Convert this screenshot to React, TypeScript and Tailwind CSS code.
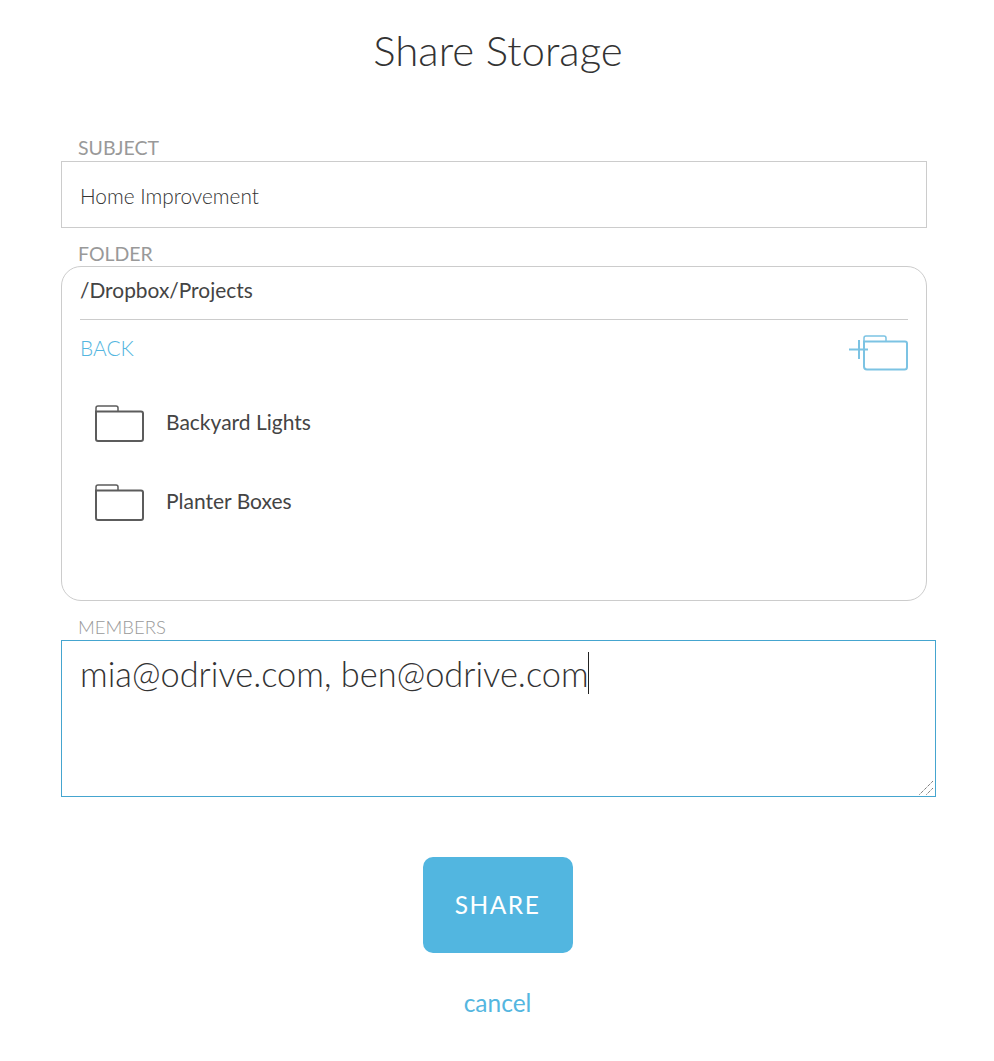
import React from "react";

const FolderIcon = ({ className }: { className?: string }) => (
  <svg width="49" height="37" viewBox="0 0 49 37" fill="none" stroke="currentColor" strokeWidth="2" className={className}>
    <path d="M1 6.5V3a2 2 0 0 1 2-2h18a2 2 0 0 1 2 2v3.5" strokeWidth="1.5" />
    <path d="M1 6.5h45a2 2 0 0 1 2 2V34a2 2 0 0 1-2 2H3a2 2 0 0 1-2-2V6.5z" />
  </svg>
);

const NewFolderIcon = () => (
  <svg width="59" height="36" viewBox="0 0 59 36" fill="none" stroke="#7cc3e3" strokeWidth="2" className="mt-[1px]">
    <path d="M15 6.5V3a2 2 0 0 1 2-2h18a2 2 0 0 1 2 2v3.5" strokeWidth="1.5" />
    <path d="M15 6.500h41a2 2 0 0 1 2 2V32a2.500 2.500 0 0 1-2.500 2.500H18a3 3 0 0 1-3-3V6.500z" />
    <path d="M0 14.500h19M10 5v19" />
  </svg>
);

const ResizeHandle = () => (
  <svg width="15" height="15" viewBox="0 0 15 15" stroke="#444" strokeWidth="1" strokeDasharray="1 1" className="absolute right-[2px] bottom-[2px]">
    <path d="M0.500 14.500L14.500 0.500M7.500 14.500L14.500 7.500" />
  </svg>
);

const FOLDERS = ["Backyard Lights", "Planter Boxes"];

export default function App() {
  return (
    <div className="h-[1061px] bg-white px-[61px] font-['Lato',sans-serif] text-[#444]">
      <h1 className="pt-[25px] pl-[2px] text-center text-[42px] leading-[50px] font-light text-[#333]">Share Storage</h1>

      <label className="mt-[61px] block h-[25px] pl-[17px] text-[19.500px] leading-[24px] text-[#999]">SUBJECT</label>
      <div className="flex h-[67px] w-[866px] items-center border border-[#ccc] pt-[3px] pl-[18px] text-[20.800px] font-light text-[#333]">
        Home Improvement
      </div>

      <label className="mt-[14px] block pl-[17px] text-[19.500px] leading-[24px] text-[#999]">FOLDER</label>
      <div className="h-[335px] w-[866px] rounded-[20px] border border-[#ccc] px-[18px]">
        <div className="flex h-[53px] items-start border-b border-[#ccc] pt-[9px] text-[20.900px] leading-[28px]">/Dropbox/Projects</div>
        <div className="flex h-[51px] items-start justify-between pt-[14px]">
          <span className="text-[20.900px] leading-[28px] font-light text-[#54b6e0]">BACK</span>
          <NewFolderIcon />
        </div>
        <ul className="mt-[13px]">
          {FOLDERS.map((name) => (
            <li key={name} className="flex h-[79px] items-center pl-[15px]">
              <FolderIcon className="text-[#5c5c5c]" />
              <span className="ml-[22px] pb-[3px] text-[21px]">{name}</span>
            </li>
          ))}
        </ul>
      </div>

      <label className="mt-[14px] block h-[25px] pl-[17px] text-[18.500px] leading-[24px] font-light text-[#999]">MEMBERS</label>
      <div className="relative w-[875px]">
        <textarea
          className="block h-[157px] w-full resize-none border border-solid border-[#45a5cf] py-[12px] pl-[18px] text-[34.400px] leading-[42px] font-light text-[#333] outline-none"
          defaultValue="mia@odrive.com, ben@odrive.com"
        />
        <span className="absolute top-[12px] left-[527px] h-[42px] w-px bg-[#222]" />
        <ResizeHandle />
      </div>

      <div className="mt-[60px] flex w-[873px] flex-col items-center">
        <button className="h-[96px] w-[150px] rounded-[10px] bg-[#52b6e0] text-[24.500px] tracking-[1.500px] text-white">SHARE</button>
        <a className="mt-[32px] text-[24.500px] leading-[36px] text-[#54b6e0]">cancel</a>
      </div>
    </div>
  );
}
